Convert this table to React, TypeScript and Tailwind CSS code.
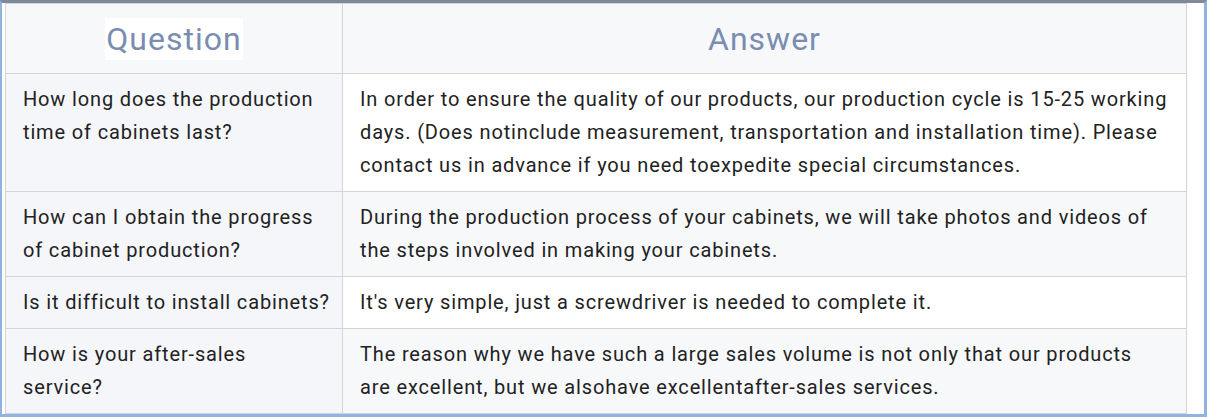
import React from "react";

const rows = [
  {
    q: "How long does the production time of cabinets last?",
    a: "In order to ensure the quality of our products, our production cycle is 15-25 working days. (Does notinclude measurement, transportation and installation time). Please contact us in advance if you need toexpedite special circumstances.",
    alt: false,
  },
  {
    q: "How can I obtain the progress of cabinet production?",
    a: "During the production process of your cabinets, we will take photos and videos of the steps involved in making your cabinets.",
    alt: true,
  },
  {
    q: "Is it difficult to install cabinets?",
    a: "It's very simple, just a screwdriver is needed to complete it.",
    alt: false,
  },
  {
    q: "How is your after-sales service?",
    a: "The reason why we have such a large sales volume is not only that our products are excellent, but we alsohave excellentafter-sales services.",
    alt: true,
  },
];

export default function App() {
  return (
    <div className="w-[1207px] h-[417px] bg-white" style={{ fontFamily: "Roboto, 'Noto Sans', sans-serif" }}>
      <div className="border-t-[3px] border-t-[#7e8999] border-l-2 border-l-[#8fb4e2] border-r-[3px] border-r-[#8fb4e2] border-b-[3px] border-b-[#8fb4e2] pl-[3px]">
        <div className="grid grid-cols-[337px_843px] w-[1182px] border border-[#d2d4d8] text-[20px] tracking-[0.85px] leading-[33px] text-[#222]">
          <div className="h-[70px] bg-[#f7f8fa] border-r border-b border-[#d2d4d8] flex items-center justify-center">
            <span className="bg-white text-[32px] tracking-[1px] leading-[42px] text-[#7a8db0] px-px">Question</span>
          </div>
          <div className="h-[70px] bg-[#f7f8fa] border-b border-[#d2d4d8] flex items-center justify-center">
            <span className="text-[32px] tracking-[1px] leading-[42px] text-[#7a8db0]">Answer</span>
          </div>
          {rows.map((r, i) => (
            <React.Fragment key={i}>
              <div
                className={`bg-[#f5f6f9] border-r border-[#d2d4d8] pl-[17px] pr-3 py-[9px] ${i < rows.length - 1 ? "border-b" : ""}`}
              >
                {r.q}
              </div>
              <div
                className={`${r.alt ? "bg-[#f7f8fa]" : "bg-white"} border-[#d2d4d8] pl-[17px] pr-[18px] py-[9px] ${i < rows.length - 1 ? "border-b" : ""}`}
              >
                {r.a}
              </div>
            </React.Fragment>
          ))}
        </div>
      </div>
    </div>
  );
}
